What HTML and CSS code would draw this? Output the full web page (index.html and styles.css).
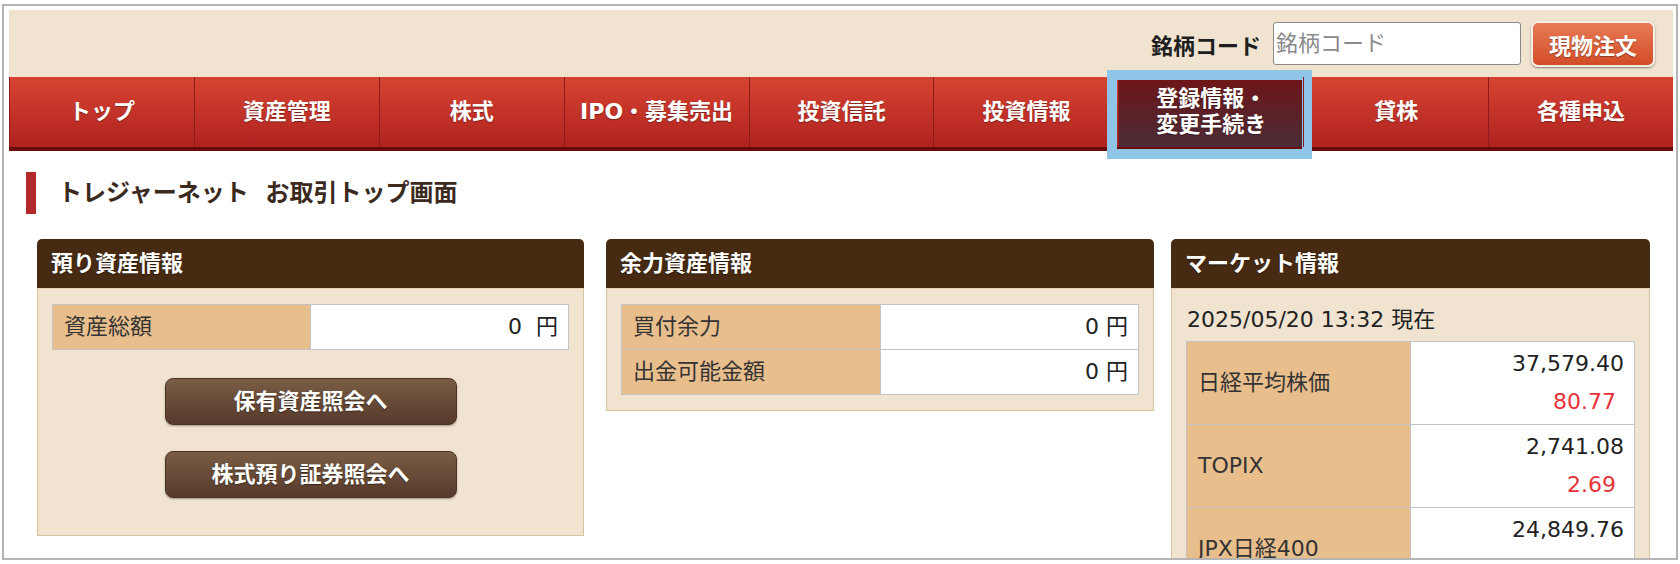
FILE: index.html
```html
<!DOCTYPE html>
<html lang="ja">
<head>
  <meta charset="UTF-8" />
  <meta name="viewport" content="width=device-width, initial-scale=1" />
  <title>トレジャーネット お取引トップ画面</title>
  <link rel="stylesheet" href="styles.css">
</head>
<body>
  <div class="frame">
    <div class="page">
      <header class="top-bar">
        <form class="code-search" onsubmit="return false;">
          <label class="code-label" for="code">銘柄コード</label>
          <input id="code" class="code-input" type="text" placeholder="銘柄コード" />
          <button class="order-btn" type="button">現物注文</button>
        </form>
      </header>

      <nav class="gnav">
        <ul>
          <li><a href="#">トップ</a></li>
          <li><a href="#">資産管理</a></li>
          <li><a href="#">株式</a></li>
          <li><a href="#">IPO・募集売出</a></li>
          <li><a href="#">投資信託</a></li>
          <li><a href="#">投資情報</a></li>
          <li class="active"><a href="#">登録情報・<br>変更手続き</a></li>
          <li><a href="#">貸株</a></li>
          <li><a href="#">各種申込</a></li>
        </ul>
      </nav>

      <main class="content">
        <h1 class="page-title">トレジャーネット&nbsp; お取引トップ画面</h1>

        <div class="panels">
          <section class="panel panel-assets">
            <h2 class="panel-head">預り資産情報</h2>
            <div class="panel-body">
              <table class="info-table">
                <tr>
                  <th>資産総額</th>
                  <td>0&nbsp;&nbsp;円</td>
                </tr>
              </table>
              <a href="#" class="brown-btn">保有資産照会へ</a>
              <a href="#" class="brown-btn">株式預り証券照会へ</a>
            </div>
          </section>

          <section class="panel panel-power">
            <h2 class="panel-head">余力資産情報</h2>
            <div class="panel-body">
              <table class="info-table">
                <tr>
                  <th>買付余力</th>
                  <td>0 円</td>
                </tr>
                <tr>
                  <th>出金可能金額</th>
                  <td>0 円</td>
                </tr>
              </table>
            </div>
          </section>

          <section class="panel panel-market">
            <h2 class="panel-head">マーケット情報</h2>
            <div class="panel-body">
              <p class="market-time">2025/05/20 13:32 現在</p>
              <table class="info-table market-table">
                <tr>
                  <th>日経平均株価</th>
                  <td>
                    <div class="price">37,579.40</div>
                    <div class="change">80.77</div>
                  </td>
                </tr>
                <tr>
                  <th>TOPIX</th>
                  <td>
                    <div class="price">2,741.08</div>
                    <div class="change">2.69</div>
                  </td>
                </tr>
                <tr>
                  <th>JPX日経400</th>
                  <td>
                    <div class="price">24,849.76</div>
                    <div class="change">143.12</div>
                  </td>
                </tr>
              </table>
            </div>
          </section>
        </div>
      </main>
    </div>
  </div>
</body>
</html>
```

FILE: styles.css
```css
* {
  box-sizing: border-box;
}
body {
  margin: 0;
  background: #fff;
  font-family: "DejaVu Sans", "Noto Sans CJK JP", sans-serif;
  color: #333;
}
.frame {
  margin: 4px 0 0 2px;
  width: 1676px;
  height: 556px;
  border: 2px solid #b4b4b4;
  padding: 4px 3px 0 5px;
  overflow: hidden;
}

/* header */
.top-bar {
  height: 67px;
  background: #f0e3d0;
  display: flex;
  align-items: center;
  justify-content: flex-end;
  padding-right: 18px;
}
.code-search {
  display: flex;
  align-items: center;
  margin: 0;
}
.code-label {
  font-size: 22px;
  font-weight: bold;
  color: #1e1e1e;
  margin-right: 12px;
}
.code-input {
  width: 248px;
  height: 43px;
  border: 1px solid #8a8a8a;
  border-radius: 3px;
  padding: 0 2px;
  font-family: "DejaVu Sans", "Noto Sans CJK JP", sans-serif;
  font-size: 22px;
  color: #333;
  background: #fff;
}
.code-input::placeholder {
  color: #8a8a8a;
}
.order-btn {
  margin-left: 10px;
  width: 124px;
  height: 46px;
  border: 2px solid #f6ede4;
  border-radius: 7px;
  background: linear-gradient(#e77b56, #d24c26);
  box-shadow: 0 1px 2px rgba(0,0,0,0.45);
  color: #fff;
  font-family: "DejaVu Sans", "Noto Sans CJK JP", sans-serif;
  font-size: 22px;
  font-weight: bold;
  text-shadow: 0 1px 1px rgba(0,0,0,0.35);
  cursor: pointer;
}

/* global nav */
.gnav ul {
  list-style: none;
  margin: 0;
  padding: 0;
  display: grid;
  grid-template-columns: repeat(9, 1fr);
  border-bottom: 4px solid #6b0c0c;
  background: linear-gradient(#d64431, #b02220);
}
.gnav li {
  position: relative;
  border-left: 1px solid #8e1b1b;
}
.gnav a {
  display: flex;
  align-items: center;
  justify-content: center;
  height: 70px;
  color: #fff;
  text-decoration: none;
  font-size: 22px;
  font-weight: bold;
  line-height: 26px;
  text-align: left;
  text-shadow: 0 1px 1px rgba(0,0,0,0.35);
}
.gnav li.active {
  background: linear-gradient(#6f1517, #4a2c37);
}
.gnav li.active::after {
  content: "";
  position: absolute;
  left: -12px;
  right: -9px;
  top: -7px;
  bottom: -12px;
  border: 10px solid #8fc6e7;
  pointer-events: none;
}

/* title */
.page-title {
  margin: 21px 0 0 17px;
  height: 42px;
  border-left: 10px solid #b3282a;
  padding-left: 22px;
  font-size: 24px;
  line-height: 42px;
  font-weight: bold;
  color: #3b2a1d;
}

/* panels */
.panels {
  display: flex;
  align-items: flex-start;
  margin-top: 25px;
  padding: 0 23px 0 28px;
}
.panel {
  flex: none;
}
.panel-assets {
  width: 547px;
}
.panel-power {
  width: 548px;
  margin-left: 22px;
}
.panel-market {
  width: 479px;
  margin-left: auto;
}
.panel-head {
  margin: 0;
  height: 49px;
  padding-left: 14px;
  background: #462a11;
  border-radius: 5px 5px 0 0;
  color: #fff;
  font-size: 22px;
  font-weight: bold;
  line-height: 49px;
  text-shadow: 0 1px 1px rgba(0,0,0,0.4);
}
.panel-body {
  background: #f0e3d0;
  border: 1px solid #d7c2a1;
  border-top-color: #e6cfae;
  padding: 15px 14px;
}
.panel-assets .panel-body {
  padding-bottom: 37px;
}

.info-table {
  width: 100%;
  border-collapse: collapse;
  table-layout: fixed;
}
.info-table th,
.info-table td {
  border: 1px solid #c3c3c3;
  font-size: 22px;
  font-weight: normal;
  line-height: 30px;
  padding: 7px 10px;
}
.info-table th {
  background: #e9be8d;
  color: #333;
  text-align: left;
  padding-left: 11px;
}
.info-table td {
  background: #fff;
  color: #222;
  text-align: right;
}

.brown-btn {
  display: block;
  width: 292px;
  height: 47px;
  margin: 28px auto 0;
  border: 1px solid #4e3322;
  border-radius: 8px;
  background: linear-gradient(#7a5d45, #56392a);
  box-shadow: 0 1px 2px rgba(0,0,0,0.35);
  color: #fff;
  text-align: center;
  text-decoration: none;
  font-size: 22px;
  font-weight: bold;
  line-height: 45px;
  text-shadow: 0 1px 1px rgba(0,0,0,0.45);
}
.brown-btn + .brown-btn {
  margin-top: 26px;
}

/* market */
.market-time {
  margin: 1px 0 6px 1px;
  font-size: 22px;
  line-height: 30px;
  color: #222;
}
.market-table th {
  vertical-align: middle;
}
.market-table td {
  padding: 6px 10px 6px 10px;
}
.price {
  line-height: 32px;
}
.change {
  margin-top: 6px;
  line-height: 32px;
  padding-right: 8px;
  color: #e8333a;
}
```
